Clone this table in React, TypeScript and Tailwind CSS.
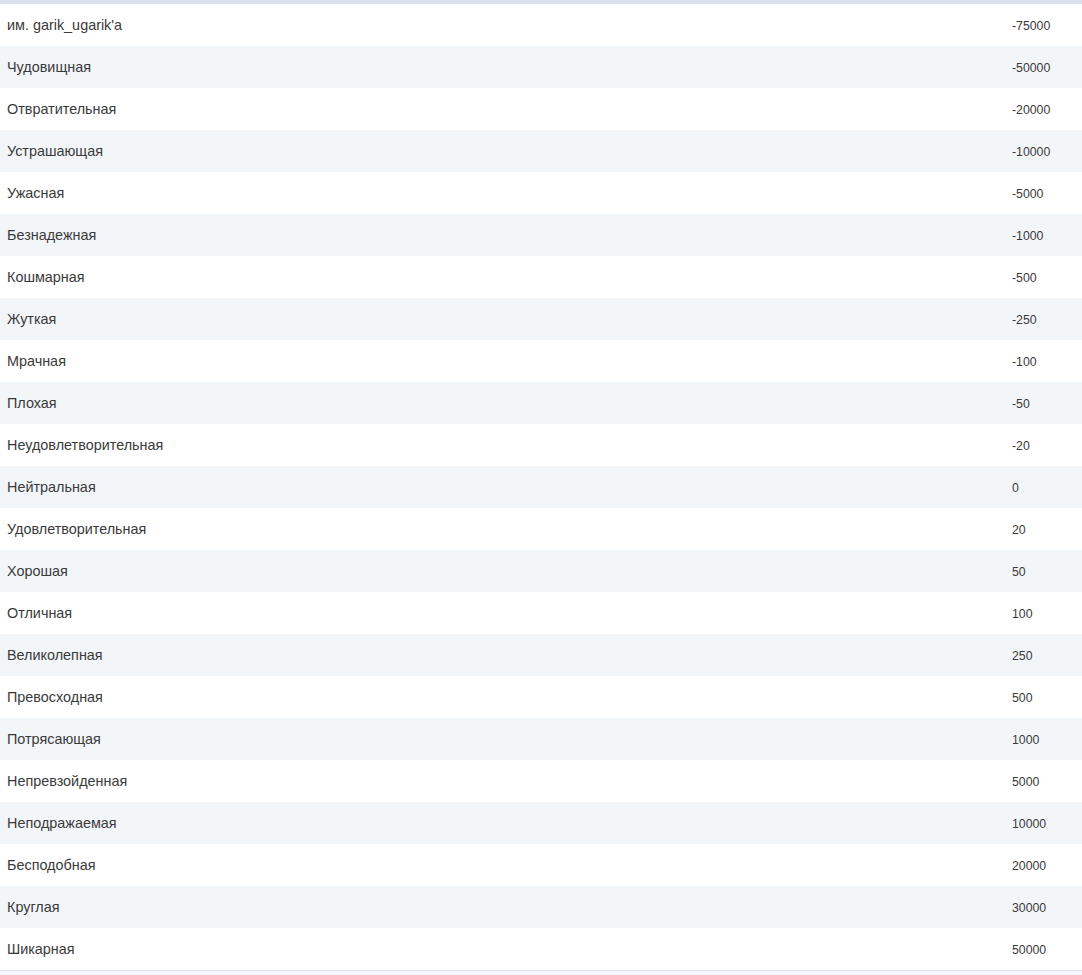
const rows: [string, string][] = [
  ["им. garik_ugarik'a", "-75000"],
  ["Чудовищная", "-50000"],
  ["Отвратительная", "-20000"],
  ["Устрашающая", "-10000"],
  ["Ужасная", "-5000"],
  ["Безнадежная", "-1000"],
  ["Кошмарная", "-500"],
  ["Жуткая", "-250"],
  ["Мрачная", "-100"],
  ["Плохая", "-50"],
  ["Неудовлетворительная", "-20"],
  ["Нейтральная", "0"],
  ["Удовлетворительная", "20"],
  ["Хорошая", "50"],
  ["Отличная", "100"],
  ["Великолепная", "250"],
  ["Превосходная", "500"],
  ["Потрясающая", "1000"],
  ["Непревзойденная", "5000"],
  ["Неподражаемая", "10000"],
  ["Бесподобная", "20000"],
  ["Круглая", "30000"],
  ["Шикарная", "50000"],
];

export default function App() {
  return (
    <div className="min-h-[975px] bg-[#f3f6f9] font-['Liberation_Sans',Arial,sans-serif] text-[#3a3a3a]">
      <div className="border-t-4 border-b border-[#d7e2ee]">
        {rows.map(([name, value], i) => (
          <div
            key={name}
            className={
              "grid grid-cols-[1005px_1fr] h-[42px] items-center pt-[2px] " +
              (i % 2 === 0 ? "bg-white" : "bg-[#f3f6f9]")
            }
          >
            <span className="pl-[7px] text-[14.4px]">{name}</span>
            <span className="pl-[7px] text-[12.3px]">{value}</span>
          </div>
        ))}
      </div>
    </div>
  );
}
